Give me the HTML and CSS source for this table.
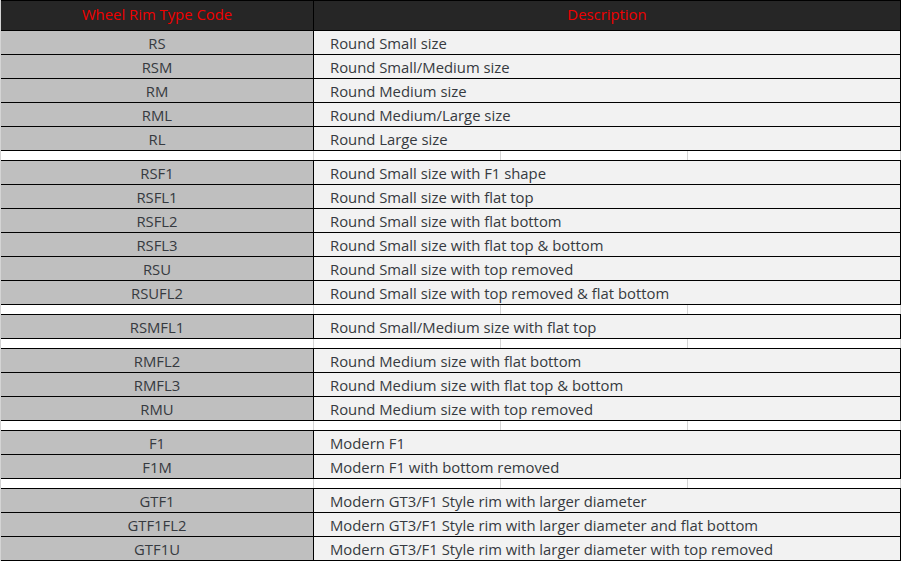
FILE: index.html
```html
<!DOCTYPE html>
<html lang="en">
<head>
<meta charset="utf-8">
<title>Wheel Rim Type Codes</title>
<link rel="stylesheet" href="styles.css">
</head>
<body>
<div class="sheet">
  <div class="row head">
    <div class="code">Wheel Rim Type Code</div>
    <div class="desc">Description</div>
  </div>

  <div class="group">
    <div class="row"><div class="code">RS</div><div class="desc">Round Small size</div></div>
    <div class="row"><div class="code">RSM</div><div class="desc">Round Small/Medium size</div></div>
    <div class="row"><div class="code">RM</div><div class="desc">Round Medium size</div></div>
    <div class="row"><div class="code">RML</div><div class="desc">Round Medium/Large size</div></div>
    <div class="row"><div class="code">RL</div><div class="desc">Round Large size</div></div>
  </div>
  <div class="spacer"><span class="g1"></span><span class="g2"></span><span class="g3"></span><span class="g4"></span></div>

  <div class="group top">
    <div class="row"><div class="code">RSF1</div><div class="desc">Round Small size with F1 shape</div></div>
    <div class="row"><div class="code">RSFL1</div><div class="desc">Round Small size with flat top</div></div>
    <div class="row"><div class="code">RSFL2</div><div class="desc">Round Small size with flat bottom</div></div>
    <div class="row"><div class="code">RSFL3</div><div class="desc">Round Small size with flat top &amp; bottom</div></div>
    <div class="row"><div class="code">RSU</div><div class="desc">Round Small size with top removed</div></div>
    <div class="row"><div class="code">RSUFL2</div><div class="desc">Round Small size with top removed &amp; flat bottom</div></div>
  </div>
  <div class="spacer"><span class="g1"></span><span class="g2"></span><span class="g3"></span><span class="g4"></span></div>

  <div class="group top">
    <div class="row"><div class="code">RSMFL1</div><div class="desc">Round Small/Medium size with flat top</div></div>
  </div>
  <div class="spacer"><span class="g1"></span><span class="g2"></span><span class="g3"></span><span class="g4"></span></div>

  <div class="group top">
    <div class="row"><div class="code">RMFL2</div><div class="desc">Round Medium size with flat bottom</div></div>
    <div class="row"><div class="code">RMFL3</div><div class="desc">Round Medium size with flat top &amp; bottom</div></div>
    <div class="row"><div class="code">RMU</div><div class="desc">Round Medium size with top removed</div></div>
  </div>
  <div class="spacer"><span class="g1"></span><span class="g2"></span><span class="g3"></span><span class="g4"></span></div>

  <div class="group top">
    <div class="row"><div class="code">F1</div><div class="desc">Modern F1</div></div>
    <div class="row"><div class="code">F1M</div><div class="desc">Modern F1 with bottom removed</div></div>
  </div>
  <div class="spacer"><span class="g1"></span><span class="g2"></span><span class="g3"></span><span class="g4"></span></div>

  <div class="group top">
    <div class="row"><div class="code">GTF1</div><div class="desc">Modern GT3/F1 Style rim with larger diameter</div></div>
    <div class="row"><div class="code">GTF1FL2</div><div class="desc">Modern GT3/F1 Style rim with larger diameter and flat bottom</div></div>
    <div class="row"><div class="code">GTF1U</div><div class="desc">Modern GT3/F1 Style rim with larger diameter with top removed</div></div>
  </div>
</div>
</body>
</html>
```

FILE: styles.css
```css
html, body {
  margin: 0;
  padding: 0;
  background: #ffffff;
}

.sheet {
  width: 900px;
  border-left: 1px solid #d4d4d4;
  font-family: "Open Sans", "DejaVu Sans", sans-serif;
  font-size: 14.85px;
  color: #363a40;
}

.row {
  display: flex;
  height: 23px;
  border-bottom: 1px solid #000;
  border-right: 1px solid #000;
}

.row .code {
  width: 313px;
  flex: none;
  box-sizing: border-box;
  border-right: 1px solid #000;
  background: #bfbfbf;
  display: flex;
  align-items: center;
  justify-content: center;
  line-height: 1;
  padding-top: 2px;
}

.row .desc {
  flex: 1;
  background: #f2f2f2;
  display: flex;
  align-items: center;
  padding-left: 16px;
  padding-top: 2px;
  line-height: 1;
}

.row.head {
  height: 29px;
  border-top: 1px solid #000;
  background: #262626;
  color: #f00000;
}

.row.head .code,
.row.head .desc {
  background: #262626;
  padding-top: 0;
  padding-bottom: 2px;
}

.row.head .desc {
  justify-content: center;
  padding-left: 0;
}

.group.top {
  border-top: 1px solid #000;
}

.spacer {
  display: flex;
  height: 9px;
  background: #fff;
}

.spacer span {
  display: block;
  border-right: 1px solid #d4d4d4;
}

.spacer .g1 { width: 312px; }
.spacer .g2 { width: 186px; }
.spacer .g3 { width: 186px; }
.spacer .g4 { width: 212px; }
```
